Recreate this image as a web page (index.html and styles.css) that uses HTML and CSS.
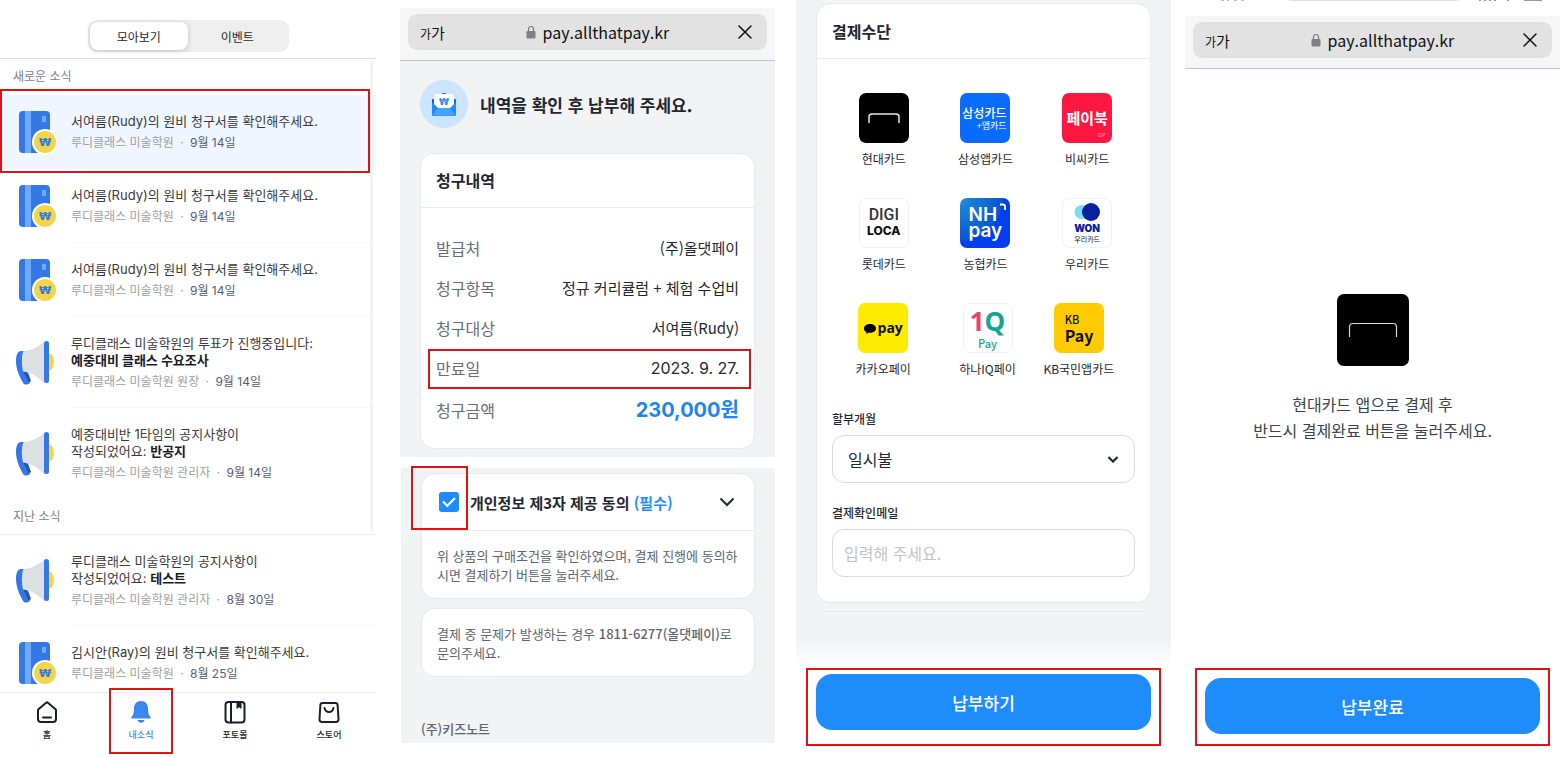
FILE: index.html
```html
<!DOCTYPE html>
<html lang="ko">
<head>
    <meta charset="UTF-8">
    <meta name="viewport" content="width=device-width, initial-scale=1.0">
    <title>원비 납부 안내</title>
    <link rel="stylesheet" href="styles.css">
</head>
<body>
    <!-- Icônes partagées -->
    <svg class="sprite" aria-hidden="true">
        <symbol id="icon-bill" viewBox="0 0 42 46">
            <rect x="4" y="2" width="31" height="42" rx="4" fill="#3478e5"/>
            <rect x="10" y="2" width="6" height="42" fill="#6faaf8"/>
            <rect x="27" y="7" width="4" height="6" fill="#6faaf8"/>
            <circle cx="30" cy="33" r="13" fill="#fff"/>
            <circle cx="30" cy="33" r="11" fill="#f3d648"/>
            <text x="30" y="37" text-anchor="middle" class="won won-coin">₩</text>
        </symbol>
        <symbol id="icon-horn" viewBox="0 0 42 46">
            <path d="M34 13.500c3 0 5 4 5 8.500s-2 8.500-5 8.500z" fill="#f3d648"/>
            <path d="M10 11H6C2.500 11 1 15.500 1 21c0 8 3.500 16 7.500 22.500 1 1.500 4 1.500 6.500-.5L10 31z" fill="#3478e5"/>
            <path d="M8 31l5 1.500 2.800 8q0 2-2.300 1.500z" fill="#1f56b0"/>
            <path d="M8 11.500C17 10 23 7 29.500 1.500v42C23 37 17 32.500 8 31.500c-1.500-6-1.500-14 0-20z" fill="#dcdfe3"/>
            <rect x="29" y="1" width="5" height="42" rx="2.500" fill="#3478e5"/>
        </symbol>
        <symbol id="icon-lock" viewBox="0 0 10 14">
            <path d="M2.500 6.500V4a2.500 2.500 0 0 1 5 0v2.500" fill="none" stroke="#808084" stroke-width="1.200"/>
            <rect x="0.500" y="6" width="9" height="7.500" rx="1" fill="#808084"/>
        </symbol>
        <symbol id="icon-close" viewBox="0 0 14 14">
            <path d="M1 1l12 12M13 1L1 13" fill="none" stroke="#111" stroke-width="1.500" stroke-linecap="round"/>
        </symbol>
        <symbol id="icon-chevron" viewBox="0 0 16 10">
            <path d="M1.500 1.500L8 8l6.500-6.500" fill="none" stroke="#1f2733"/>
        </symbol>
        <symbol id="icon-hyundai" viewBox="0 0 50 50">
            <rect width="50" height="50" rx="6" fill="#000"/>
            <path d="M10 30v-6q0-3 3-3h24q3 0 3 3v6" fill="none" stroke="#e6e6e2" stroke-width="1.500"/>
        </symbol>
    </svg>

    <div class="board">
        <!-- Écran 1 : liste des nouvelles -->
        <section class="panel news">
            <header class="news-header">
                <div class="tabs">
                    <button type="button" class="tab active">모아보기</button>
                    <button type="button" class="tab">이벤트</button>
                </div>
            </header>
            <div class="news-body">
                <h2 class="news-label">새로운 소식</h2>
                <ul class="news-list">
                    <li class="news-item unread">
                        <svg class="news-icon"><use href="#icon-bill"/></svg>
                        <div class="news-text">
                            <p>서여름(Rudy)의 원비 청구서를 확인해주세요.</p>
                            <p class="meta">루디클래스 미술학원 <span>·</span> <time>9월 14일</time></p>
                        </div>
                        <span class="mark"></span>
                    </li>
                    <li class="news-item">
                        <svg class="news-icon"><use href="#icon-bill"/></svg>
                        <div class="news-text">
                            <p>서여름(Rudy)의 원비 청구서를 확인해주세요.</p>
                            <p class="meta">루디클래스 미술학원 <span>·</span> <time>9월 14일</time></p>
                        </div>
                    </li>
                    <li class="news-item">
                        <svg class="news-icon"><use href="#icon-bill"/></svg>
                        <div class="news-text">
                            <p>서여름(Rudy)의 원비 청구서를 확인해주세요.</p>
                            <p class="meta">루디클래스 미술학원 <span>·</span> <time>9월 14일</time></p>
                        </div>
                    </li>
                    <li class="news-item">
                        <svg class="news-icon"><use href="#icon-horn"/></svg>
                        <div class="news-text">
                            <p>루디클래스 미술학원의 투표가 진행중입니다:<br><strong>예중대비 클래스 수요조사</strong></p>
                            <p class="meta">루디클래스 미술학원 원장 <span>·</span> <time>9월 14일</time></p>
                        </div>
                    </li>
                    <li class="news-item">
                        <svg class="news-icon"><use href="#icon-horn"/></svg>
                        <div class="news-text">
                            <p>예중대비반 1타임의 공지사항이<br>작성되었어요: <strong>반공지</strong></p>
                            <p class="meta">루디클래스 미술학원 관리자 <span>·</span> <time>9월 14일</time></p>
                        </div>
                    </li>
                </ul>
                <h2 class="news-label past">지난 소식</h2>
                <ul class="news-list">
                    <li class="news-item">
                        <svg class="news-icon"><use href="#icon-horn"/></svg>
                        <div class="news-text">
                            <p>루디클래스 미술학원의 공지사항이<br>작성되었어요: <strong>테스트</strong></p>
                            <p class="meta">루디클래스 미술학원 관리자 <span>·</span> <time>8월 30일</time></p>
                        </div>
                    </li>
                    <li class="news-item">
                        <svg class="news-icon"><use href="#icon-bill"/></svg>
                        <div class="news-text">
                            <p>김시안(Ray)의 원비 청구서를 확인해주세요.</p>
                            <p class="meta">루디클래스 미술학원 <span>·</span> <time>8월 25일</time></p>
                        </div>
                    </li>
                </ul>
                <span class="scrollbar"></span>
            </div>
            <nav class="bottom-nav">
                <a href="#">
                    <svg viewBox="0 0 24 24"><path d="M3 10.500q0-1 .8-1.600l7-6q1.200-1 2.400 0l7 6q.8.600.8 1.600V19q0 3-3 3H6q-3 0-3-3zM8 17.500h8"/></svg>
                    홈
                </a>
                <a href="#" class="current">
                    <svg viewBox="0 0 24 24"><path class="fill" d="M12 1C7.500 1 5 4 5 8.500c0 4.500-.8 6.500-2.500 8.500-.5.700-.2 1.500.7 1.500h17.600c.9 0 1.200-.8.700-1.500-1.700-2-2.500-4-2.500-8.500C19 4 16.500 1 12 1zM8.500 20h7c-.5 1.800-1.800 2.800-3.500 2.800S9 21.800 8.500 20z"/></svg>
                    내소식
                    <span class="mark"></span>
                </a>
                <a href="#">
                    <svg viewBox="0 0 24 24"><rect x="2.500" y="2" width="19" height="20.500" rx="3"/><path d="M8 2v20.500"/><path class="fill" d="M13.500 2h5v7L16 7.200 13.500 9z"/></svg>
                    포토몰
                </a>
                <a href="#">
                    <svg viewBox="0 0 24 24"><path d="M5.500 3h13q2 0 2.100 2l.9 14q.2 3-2.800 3H5.300q-3 0-2.800-3l.9-14Q3.500 3 5.500 3zM7.500 8q1 4 4.500 4t4.500-4"/></svg>
                    스토어
                </a>
            </nav>
        </section>

        <!-- Écran 2 : détail de la facture -->
        <section class="panel bill">
            <div class="screen">
                <div class="browser-bar">
                    <div class="address">
                        <span class="text-size"><small>가</small>가</span>
                        <span class="url"><svg class="lock"><use href="#icon-lock"/></svg>pay.allthatpay.kr</span>
                        <button type="button" class="close" aria-label="닫기"><svg><use href="#icon-close"/></svg></button>
                    </div>
                </div>
                <div class="bill-content">
                    <div class="bill-title">
                        <svg viewBox="0 0 48 48">
                            <circle cx="24" cy="24" r="24" fill="#cce4ff"/>
                            <path d="M12 20q0-1 1-1h22q1 0 1 1v14H12z" fill="#0b62c9"/>
                            <circle cx="24" cy="16" r="3" fill="#0b62c9"/>
                            <rect x="14" y="14" width="20" height="15" rx="3" fill="#fff"/>
                            <path d="M12 22l6 6h12l6-6v13q0 1-1 1H13q-1 0-1-1z" fill="#1e8cff"/>
                            <path d="M12.500 35.500L18 28h12l5.500 7.500z" fill="#46a2ff"/>
                            <text x="24" y="25" text-anchor="middle" class="won won-mail">₩</text>
                        </svg>
                        <h1>내역을 확인 후 납부해 주세요.</h1>
                    </div>
                    <div class="card">
                        <h2 class="card-header">청구내역</h2>
                        <dl class="bill-rows">
                            <div><dt>발급처</dt><dd>(주)올댓페이</dd></div>
                            <div><dt>청구항목</dt><dd>정규 커리큘럼 + 체험 수업비</dd></div>
                            <div><dt>청구대상</dt><dd>서여름(Rudy)</dd></div>
                            <div class="due"><dt>만료일</dt><dd>2023. 9. 27.</dd><span class="mark"></span></div>
                            <div class="amount"><dt>청구금액</dt><dd>230,000원</dd></div>
                        </dl>
                    </div>
                </div>
            </div>
            <div class="screen agree">
                <div class="card">
                    <div class="agree-header">
                        <input type="checkbox" id="agree" checked>
                        <label for="agree">개인정보 제3자 제공 동의 <em>(필수)</em></label>
                        <svg class="chevron"><use href="#icon-chevron"/></svg>
                        <span class="mark"></span>
                    </div>
                    <p class="note">위 상품의 구매조건을 확인하였으며, 결제 진행에 동의하시면 결제하기 버튼을 눌러주세요.</p>
                </div>
                <div class="card">
                    <p class="note">결제 중 문제가 발생하는 경우 <b>1811-6277(올댓페이)</b>로 문의주세요.</p>
                </div>
                <p class="company">(주)키즈노트</p>
            </div>
        </section>

        <!-- Écran 3 : moyen de paiement -->
        <section class="panel pay">
            <div class="screen pay-screen">
                <div class="card">
                    <h2 class="card-header">결제수단</h2>
                    <div class="methods">
                        <button type="button" class="method"><svg class="logo"><use href="#icon-hyundai"/></svg>현대카드</button>
                        <button type="button" class="method"><span class="logo samsung"><b>삼성카드</b><small>+앱카드</small></span>삼성앱카드</button>
                        <button type="button" class="method"><span class="logo paybook"><b>페이북</b><small>ISP</small></span>비씨카드</button>
                        <button type="button" class="method"><span class="logo loca"><i>DIGI</i><b>LOCA</b></span>롯데카드</button>
                        <button type="button" class="method">
                            <span class="logo nh"><svg viewBox="0 0 8 8"><path d="M1 1.500h3q2 0 2 2V7" fill="none" stroke="#fff" stroke-width="1.800"/></svg><b>NH</b><b>pay</b></span>농협카드
                        </button>
                        <button type="button" class="method">
                            <span class="logo won-card"><svg viewBox="0 0 28 18"><circle cx="8.500" cy="9" r="7" fill="#7fdcf5"/><circle cx="18" cy="9" r="9" fill="#0a1fa0"/></svg><b>WON</b><small>우리카드</small></span>우리카드
                        </button>
                    </div>
                    <div class="methods methods-more">
                        <button type="button" class="method">
                            <span class="logo kakao"><svg viewBox="0 0 12 10"><path d="M6 0C2.500 0 0 2 0 4.500c0 1.600 1 3 2.500 3.700L2 10l2.500-1.300c.5.100 1 .1 1.500.1 3.500 0 6-1.900 6-4.300S9.500 0 6 0z"/></svg><b>pay</b></span>카카오페이
                        </button>
                        <button type="button" class="method"><span class="logo hana"><b><i>1</i>Q</b><small>Pay</small></span>하나IQ페이</button>
                        <button type="button" class="method"><span class="logo kb"><small>KB</small><b>Pay</b></span>KB국민앱카드</button>
                    </div>
                    <form class="pay-form">
                        <label for="months">할부개월</label>
                        <div class="select-box">
                            <select id="months">
                                <option>일시불</option>
                            </select>
                            <svg class="chevron small"><use href="#icon-chevron"/></svg>
                        </div>
                        <label for="email">결제확인메일</label>
                        <input type="email" id="email" placeholder="입력해 주세요.">
                    </form>
                </div>
                <hr>
            </div>
            <div class="action tight">
                <button type="button" class="primary">납부하기</button>
            </div>
        </section>

        <!-- Écran 4 : confirmation -->
        <section class="panel done">
            <svg class="cut-status" viewBox="0 0 375 16">
                <path d="M102 0h173q-3 1-7 1H109q-4 0-7-1z" fill="#ddd"/>
                <path d="M36 0h3M42 0h2M49 0h3M56 0h3" stroke="#bbb" stroke-width="2"/>
                <path d="M294 0h2M299 0h2M304 0h2M309 0h2M322 0h2M339 0h18" stroke="#999" stroke-width="2"/>
            </svg>
            <div class="browser-bar">
                <div class="address">
                    <span class="text-size"><small>가</small>가</span>
                    <span class="url"><svg class="lock"><use href="#icon-lock"/></svg>pay.allthatpay.kr</span>
                    <button type="button" class="close" aria-label="닫기"><svg><use href="#icon-close"/></svg></button>
                </div>
            </div>
            <div class="done-content">
                <svg viewBox="0 0 72 72">
                    <rect width="72" height="72" rx="7" fill="#000"/>
                    <path d="M12.500 43V33q0-3.500 3.500-3.500h40q3.500 0 3.500 3.500v10" fill="none" stroke="#d8d8d4" stroke-width="1.200"/>
                </svg>
                <p>현대카드 앱으로 결제 후<br>반드시 결제완료 버튼을 눌러주세요.</p>
            </div>
            <div class="action">
                <button type="button" class="primary">납부완료</button>
            </div>
        </section>
    </div>
</body>
</html>
```
FILE: styles.css
```css
* {
    box-sizing: border-box;
}
body {
    margin: 0;
    background: #fff;
    color: #1f2733;
    font-family: "Noto Sans CJK KR", sans-serif;
    font-size: 16px;
}
h1, h2, p, ul, dl, dd {
    margin: 0;
    padding: 0;
}
ul {
    list-style: none;
}
button, input, select {
    font-family: inherit;
    color: inherit;
}
button {
    border: none;
    background: none;
    padding: 0;
    cursor: pointer;
}
svg {
    display: block;
    flex: none;
}
.sprite {
    display: none;
}
.won {
    font-family: "DejaVu Sans", sans-serif;
    font-weight: 700;
}
.won-coin {
    font-size: 11px;
    fill: #3478e5;
}
.won-mail {
    font-size: 9px;
    fill: #1e8cff;
}

/* Mise en page générale */
.board {
    display: flex;
    height: 100vh;
}
.panel {
    flex: 375;
    min-width: 0;
    display: flex;
    flex-direction: column;
}
.news {
    flex: 376;
    margin-right: 24px;
}
.bill {
    margin-right: 21px;
}
.pay {
    margin-right: 14px;
}

/* Cadre rouge des étapes */
.mark {
    position: absolute;
    border: 2px solid #dc1414;
    pointer-events: none;
}

/* Écran 1 */
.news {
    font-family: Inter, "Noto Sans CJK KR", sans-serif;
}
.news-header {
    display: flex;
    justify-content: center;
    padding: 20px 0 6px;
    border-bottom: 1px solid #dfdfe1;
}
.tabs {
    display: flex;
    width: 201px;
    height: 32px;
    padding: 2px;
    background: #eee;
    border-radius: 9px;
}
.tab {
    flex: 1;
    font-size: 12px;
    border-radius: 8px;
}
.tab.active {
    background: #fff;
    box-shadow: 0 1px 4px rgba(0, 0, 0, 0.2);
}
.news-body {
    position: relative;
    flex: 1;
    min-height: 0;
    overflow: hidden;
}
.news-label {
    height: 36px;
    padding-left: 13px;
    font-size: 12px;
    font-weight: 400;
    line-height: 36px;
    color: #7b8194;
}
.news-label.past {
    border-bottom: 1px solid #ececee;
}
.news-item {
    position: relative;
    display: flex;
    align-items: center;
    gap: 14px;
    padding-left: 15px;
}
.news-icon {
    width: 42px;
    height: 46px;
}
.news-text {
    flex: 1;
    padding: 18px 0 17px;
    border-bottom: 1px solid #f7f7f8;
    font-size: 13px;
    line-height: 17px;
    color: #3a3a3c;
}
.news-item:last-child .news-text {
    border-color: transparent;
}
.unread {
    background: #eff6ff;
}
.unread .mark {
    inset: -6px 6px -4px 0;
}
.news-text strong {
    color: #1a1c2c;
}
.meta {
    margin-top: 4px;
    font-size: 12px;
    color: #a0a0a4;
}
.meta span {
    margin: 0 3px;
}
.meta time {
    color: #565c76;
}
.scrollbar {
    position: absolute;
    top: 2px;
    right: 3px;
    width: 3px;
    height: 470px;
    background: #f3f3f4;
}
.bottom-nav {
    display: flex;
    height: 66px;
    border-top: 1px solid #ececee;
}
.bottom-nav a {
    position: relative;
    flex: 1;
    display: flex;
    flex-direction: column;
    align-items: center;
    gap: 5px;
    padding-top: 7px;
    font-size: 9px;
    font-weight: 500;
    line-height: 12px;
    color: #1a1f2b;
    text-decoration: none;
}
.bottom-nav svg {
    width: 24px;
    height: 24px;
    fill: none;
    stroke: #1a1f2b;
    stroke-width: 2;
    stroke-linecap: round;
}
.bottom-nav .fill {
    fill: #1a1f2b;
    stroke: none;
}
.bottom-nav .current {
    color: #3b86f0;
}
.bottom-nav .current .fill {
    fill: #3b86f0;
}
.current .mark {
    inset: -5px 15px 4px;
}

/* Barre du navigateur */
.browser-bar {
    padding: 6px 8px 10px;
    background: #f6f6f7;
    border-bottom: 1px solid #bcc5dc;
}
.address {
    display: flex;
    align-items: center;
    justify-content: space-between;
    height: 36px;
    padding: 0 15px 0 12px;
    background: #e2e2e2;
    border-radius: 9px;
    color: #111;
}
.text-size {
    font-size: 15px;
}
.text-size small {
    font-size: 12px;
}
.url {
    display: flex;
    align-items: center;
    gap: 7px;
    padding-left: 12px;
    font-size: 16px;
}
.lock {
    width: 10px;
    height: 14px;
}
.close svg {
    width: 14px;
    height: 14px;
}

/* Écran 2 */
.bill {
    padding-top: 8px;
}
.screen {
    background: #f2f3f5;
}
.bill-content {
    padding: 19px 20px 8px;
}
.bill-title {
    display: flex;
    align-items: center;
    gap: 12px;
    margin-bottom: 25px;
}
.bill-title svg {
    width: 48px;
    height: 48px;
}
h1 {
    font-size: 17px;
}
.card {
    background: #fff;
    border: 1px solid #e8eaed;
    border-radius: 14px;
}
.card-header {
    padding: 0 15px;
    border-bottom: 1px solid #e8eaed;
    font-size: 16px;
    line-height: 53px;
}
.bill-rows {
    display: flex;
    flex-direction: column;
    gap: 16px;
    padding: 28px 15px 24px;
    line-height: 24px;
}
.bill-rows div {
    position: relative;
    display: flex;
    justify-content: space-between;
}
.bill-rows dt {
    color: #656d7a;
}
.bill-rows dd {
    font-size: 15px;
}
.bill-rows .due dd {
    font-family: Inter, sans-serif;
    font-size: 16px;
}
.due .mark {
    inset: -7px -12px -9px -8px;
}
.bill-rows .amount {
    line-height: 28px;
}
.bill-rows .amount dd {
    font-family: Inter, "Noto Sans CJK KR", sans-serif;
    font-size: 20px;
    font-weight: 700;
    color: #1e86ee;
}
.agree {
    margin: 11px 0 0 1px;
    padding: 5px 20px;
}
.agree .card {
    margin-bottom: 9px;
}
.agree-header {
    position: relative;
    display: flex;
    align-items: center;
    gap: 11px;
    height: 57px;
    padding: 0 19px 0 17px;
    border-bottom: 1px solid #e8eaed;
    font-size: 15px;
    font-weight: 700;
}
.agree-header label {
    flex: 1;
}
.agree-header em {
    font-style: normal;
    color: #1e8cff;
}
.agree-header input {
    appearance: none;
    display: grid;
    place-items: center;
    width: 20px;
    height: 20px;
    margin: 0;
    background: #1e8cff;
    border-radius: 3px;
}
.agree-header input::after {
    content: "";
    width: 10px;
    height: 5px;
    margin-bottom: 3px;
    border: solid #fff;
    border-width: 0 0 2px 2px;
    transform: rotate(-45deg);
}
.agree-header .mark {
    top: -8px;
    left: -11px;
    width: 57px;
    height: 64px;
}
.chevron {
    width: 16px;
    height: 10px;
    stroke-width: 2;
}
.note {
    padding: 15px 15px 14px;
    font-size: 13px;
    line-height: 19px;
    color: #5d6572;
    word-break: break-all;
}
.note b {
    font-weight: 500;
}
.company {
    margin-top: 42px;
    font-size: 13px;
    font-weight: 500;
    line-height: 19px;
    color: #5d6572;
}

/* Écran 3 */
.pay-screen {
    flex: 1;
    padding: 3px 20px 0;
    background: linear-gradient(#f2f3f5 calc(100% - 24px), #fff);
}
.pay .card-header {
    line-height: 54px;
}
.methods {
    display: grid;
    grid-template-columns: 1fr 1fr 1fr;
    row-gap: 30px;
    padding: 34px 12px 0 16px;
}
.methods-more {
    grid-template-columns: 100fr 108fr 74fr 22fr;
    padding-top: 30px;
}
.method {
    display: flex;
    flex-direction: column;
    align-items: center;
    gap: 7px;
    font-size: 12px;
    line-height: 18px;
    white-space: nowrap;
}
.logo {
    display: flex;
    flex-direction: column;
    justify-content: center;
    width: 50px;
    height: 50px;
    border-radius: 7px;
    color: #fff;
}
.logo small {
    font-size: 9px;
    line-height: 11px;
}
.samsung {
    align-items: flex-end;
    padding: 0 4px;
    background: #0a6cff;
}
.samsung b {
    font-size: 12px;
    font-weight: 500;
    line-height: 14px;
}
.paybook {
    position: relative;
    align-items: center;
    background: #fb1740;
}
.paybook b {
    font-size: 15px;
}
.logo.paybook small {
    position: absolute;
    right: 7px;
    bottom: 4px;
    font-size: 5px;
    line-height: 8px;
    color: #ff9db0;
}
.loca, .won-card, .hana {
    align-items: center;
    border: 1px solid #f0f1f3;
    color: #111;
}
.loca i {
    font: 500 16px/16px Roboto, sans-serif;
    color: #333;
}
.loca b {
    font: 800 12px/16px Inter, sans-serif;
}
.nh {
    position: relative;
    padding-left: 8px;
    align-items: flex-start;
    background: radial-gradient(circle at 0 0, #1f8fd8, #0a55d0 60%, #0040f0 61%);
}
.nh b {
    font: 600 19px/16px Inter, sans-serif;
}
.nh svg {
    position: absolute;
    top: 5px;
    right: 3px;
    width: 8px;
    height: 8px;
}
.won-card svg {
    width: 28px;
    height: 18px;
}
.won-card b {
    font: 900 10px/14px Inter, sans-serif;
    color: #0a1fa0;
}
.logo.won-card small {
    font-size: 7px;
    line-height: 8px;
}
.kakao {
    flex-direction: row;
    align-items: center;
    gap: 2px;
    background: #ffeb00;
    color: #111;
}
.kakao svg {
    width: 12px;
    height: 10px;
    margin-top: 2px;
}
.kakao b {
    font: 700 14px/18px "Open Sans", sans-serif;
}
.hana b {
    font: 700 26px/30px "Open Sans", sans-serif;
    color: #14a596;
}
.hana i {
    font-style: normal;
    color: #e5436b;
}
.logo.hana small {
    font-size: 11px;
    font-weight: 500;
    line-height: 14px;
    color: #14a596;
}
.kb {
    padding-left: 11px;
    align-items: flex-start;
    background: #ffcb00;
    color: #111;
}
.logo.kb small {
    font-size: 11px;
    font-weight: 500;
    line-height: 14px;
}
.kb b {
    font-size: 16px;
    line-height: 18px;
}
.pay-form {
    display: flex;
    flex-direction: column;
    padding: 32px 15px 25px;
}
.pay-form label {
    margin-bottom: 7px;
    font-size: 12px;
    font-weight: 500;
    line-height: 18px;
}
.pay-form select, .pay-form input {
    appearance: none;
    width: 100%;
    height: 48px;
    border: 1px solid #d9dbe0;
    border-radius: 12px;
    background: #fff;
    font-size: 16px;
}
.pay-form select {
    padding: 0 15px;
}
.pay-form input {
    padding: 0 11px;
}
.pay-form input::placeholder {
    color: #bfc3ca;
}
.select-box {
    position: relative;
    margin-bottom: 21px;
}
.chevron.small {
    position: absolute;
    top: 21px;
    right: 16px;
    width: 12px;
    height: 7px;
    stroke-width: 3;
}
hr {
    margin: 8px 7px 0;
    border: none;
    border-top: 1px solid #e6e8eb;
}

/* Boutons de validation */
.action {
    margin: 0 10px 12px;
    padding: 8px 8px 10px;
    border: 2px solid #dc1414;
}
.action.tight {
    padding: 4px 8px 14px;
}
.primary {
    display: block;
    width: 100%;
    height: 56px;
    border-radius: 16px;
    background: #1e8cfb;
    color: #fff;
    font-size: 17px;
    font-weight: 500;
}

/* Écran 4 */
.cut-status {
    width: 100%;
    height: 16px;
}
.done-content {
    flex: 1;
    display: flex;
    flex-direction: column;
    align-items: center;
    justify-content: center;
    gap: 25px;
}
.done-content svg {
    width: 72px;
    height: 72px;
}
.done-content p {
    font-size: 16px;
    line-height: 26px;
    text-align: center;
    color: #3c4350;
}
```
